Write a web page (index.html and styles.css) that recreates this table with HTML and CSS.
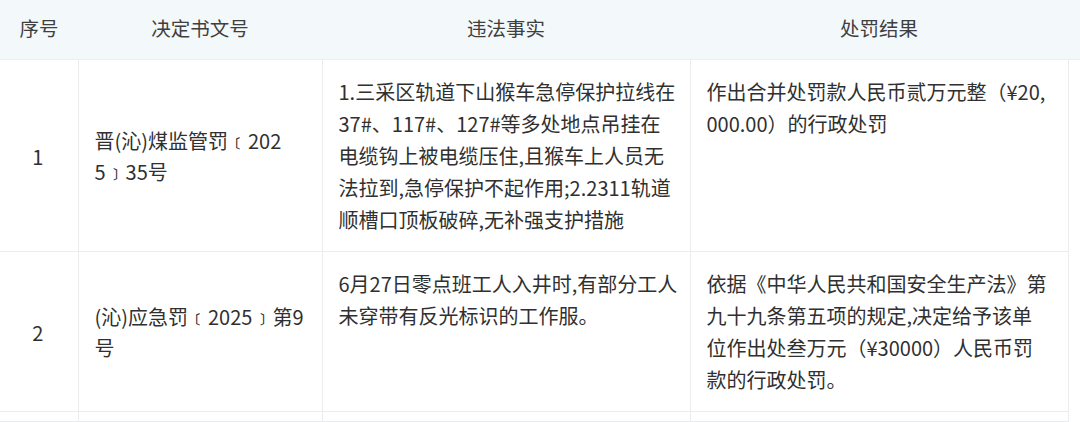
FILE: index.html
```html
<!DOCTYPE html>
<html lang="zh-CN">
<head>
<meta charset="utf-8">
<title>处罚信息</title>
<link rel="stylesheet" href="styles.css">
</head>
<body>
<table class="penalty-table">
  <colgroup>
    <col class="c-no">
    <col class="c-doc">
    <col class="c-fact">
    <col class="c-result">
    <col class="c-edge">
  </colgroup>
  <thead>
    <tr>
      <th>序号</th>
      <th>决定书文号</th>
      <th>违法事实</th>
      <th>处罚结果</th>
      <th class="edge"></th>
    </tr>
  </thead>
  <tbody>
    <tr class="row-1">
      <td class="mid center">1</td>
      <td class="mid">晋(沁)煤监管罚﹝202<br>5﹞35号</td>
      <td class="top">1.三采区轨道下山猴车急停保护拉线在<br>37#、117#、127#等多处地点吊挂在<br>电缆钩上被电缆压住,且猴车上人员无<br>法拉到,急停保护不起作用;2.2311轨道<br>顺槽口顶板破碎,无补强支护措施</td>
      <td class="top">作出合并处罚款人民币贰万元整（¥20,<br>000.00）的行政处罚</td>
      <td class="edge"></td>
    </tr>
    <tr class="row-2">
      <td class="mid center">2</td>
      <td class="mid">(沁)应急罚﹝2025﹞第9<br>号</td>
      <td class="top">6月27日零点班工人入井时,有部分工人<br>未穿带有反光标识的工作服。</td>
      <td class="top">依据《中华人民共和国安全生产法》第<br>九十九条第五项的规定,决定给予该单<br>位作出处叁万元（¥30000）人民币罚<br>款的行政处罚。</td>
      <td class="edge"></td>
    </tr>
    <tr class="row-3">
      <td></td>
      <td></td>
      <td></td>
      <td></td>
      <td class="edge"></td>
    </tr>
  </tbody>
</table>
</body>
</html>
```

FILE: styles.css
```css
html, body {
  margin: 0;
  padding: 0;
  background: #ffffff;
}

body {
  font-family: "Noto Sans CJK SC", "Noto Sans", sans-serif;
  color: #303030;
  width: 1080px;
  height: 422px;
  overflow: hidden;
}

.penalty-table {
  width: 1080px;
  table-layout: fixed;
  border-collapse: collapse;
  font-size: 20px;
  line-height: 32px;
}

.c-no { width: 78px; }
.c-doc { width: 244px; }
.c-fact { width: 368px; }
.c-result { width: 378px; }
.c-edge { width: 12px; }

thead th {
  height: 56px;
  padding: 0 0 3px 0;
  background: #f3f8fb;
  font-weight: normal;
  font-size: 19.5px;
  color: #3f3f3f;
  text-align: center;
  vertical-align: middle;
  border-bottom: 1px solid #edf1f4;
}

tbody td {
  padding: 16px 8px 15px 16px;
  border: 1px solid #eaedf0;
  white-space: nowrap;
  overflow: hidden;
  text-align: left;
}

tbody td:first-child {
  border-left: none;
}

tbody td.edge {
  border: none;
  border-left: 1px solid #eaedf0;
  padding: 0;
}

thead th.edge {
  padding: 0;
}

td.mid {
  vertical-align: middle;
  line-height: 31px;
}

td.top {
  vertical-align: top;
}

td.center {
  text-align: center;
  padding-left: 2px;
  padding-right: 4px;
}

.row-3 td {
  height: 9px;
  padding: 0;
}
```
